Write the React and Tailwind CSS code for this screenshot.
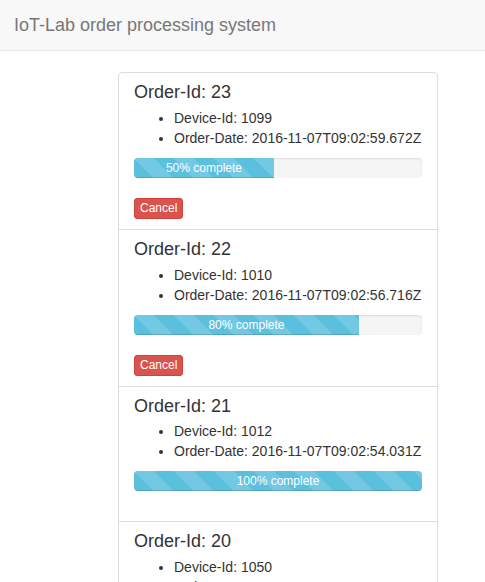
const orders = [
  { id: 23, device: 1099, date: "2016-11-07T09:02:59.672Z", progress: 50, width: "48.6%" },
  { id: 22, device: 1010, date: "2016-11-07T09:02:56.716Z", progress: 80, width: "78.1%" },
  { id: 21, device: 1012, date: "2016-11-07T09:02:54.031Z", progress: 100, width: "100%" },
  { id: 20, device: 1050, date: "2016-11-07T09:02:50.985Z", progress: 30, width: "28%" },
];

function ProgressBar({ value, width }) {
  return (
    <div className="mb-5 h-5 overflow-hidden rounded bg-[#f5f5f5] shadow-[inset_0_1px_2px_rgba(0,0,0,0.1)]">
      <div
        className="h-full bg-[#5bc0de] bg-[linear-gradient(45deg,rgba(255,255,255,.15)_25%,transparent_25%,transparent_50%,rgba(255,255,255,.15)_50%,rgba(255,255,255,.15)_75%,transparent_75%,transparent)] bg-size-[40px_40px] text-center text-xs leading-5 whitespace-nowrap text-white shadow-[inset_0_-1px_0_rgba(0,0,0,0.15)]"
        style={{ width }}
      >
        {value}% complete
      </div>
    </div>
  );
}

function OrderItem({ order, first }) {
  return (
    <div
      className={`-mb-px border border-[#ddd] bg-white px-[15px] py-2.5 text-sm leading-5 ${first ? "rounded-t" : ""}`}
    >
      <h4 className="mb-[5px] text-lg leading-[1.1] font-medium text-[#333]">Order-Id: {order.id}</h4>
      <ul className="mb-2.5 list-disc pl-10 text-[#333]">
        <li>Device-Id: {order.device}</li>
        <li>Order-Date: {order.date}</li>
      </ul>
      <ProgressBar value={order.progress} width={order.width} />
      {order.progress < 100 && (
        <button className="block h-[21px] rounded-[3px] border border-[#d43f3a] bg-[#d9534f] px-[5px] text-xs leading-[17px] text-white">
          Cancel
        </button>
      )}
    </div>
  );
}

export default function App() {
  return (
    <div className="min-h-[582px] bg-white font-['Liberation_Sans',Arial,sans-serif] text-[#333]">
      <nav className="h-[51px] border-b border-[#e7e7e7] bg-[#f8f8f8]">
        <div className="px-[14px] py-[15px] text-lg leading-5 text-[#777]">IoT-Lab order processing system</div>
      </nav>
      <div className="mt-[21px] ml-[118px] w-[320px]">
        {orders.map((order, i) => (
          <OrderItem key={order.id} order={order} first={i === 0} />
        ))}
      </div>
    </div>
  );
}
